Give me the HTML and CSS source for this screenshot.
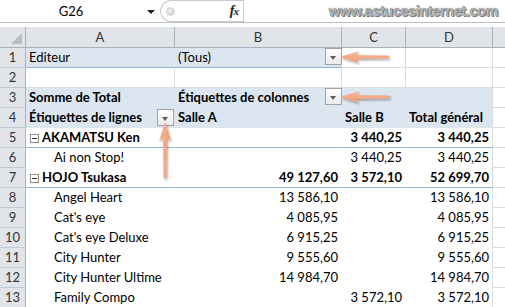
FILE: index.html
```html
<!DOCTYPE html>
<html lang="fr">
<head>
<meta charset="utf-8">
<title>Tableau croisé dynamique</title>
<link rel="stylesheet" href="styles.css">
</head>
<body>
<div class="app">
  <div class="fbar">
    <div class="namebox"><span class="ref">G26</span><span class="nb-arrow"></span></div>
    <div class="fxzone"><span class="grip"></span><span class="fx"><i>f</i><i class="x">x</i></span></div>
    <div class="finput"><span class="wm">www.astucesinternet.com</span></div>
  </div>

  <div class="sheet">
    <div class="corner"><svg width="12" height="12" viewBox="0 0 12 12"><polygon points="0,11 11,11 11,0" fill="#b7bdc5"/></svg></div>
    <div class="ch">A</div><div class="ch">B</div><div class="ch">C</div><div class="ch">D</div><div class="ch e"></div>

    <div class="rh">1</div>
    <div class="pv sep">Editeur</div>
    <div class="pv sep flex"><span>(Tous)</span><span class="dd edge"></span></div>
    <div></div><div></div><div class="e"></div>

    <div class="rh">2</div>
    <div></div><div></div><div></div><div></div><div class="e"></div>

    <div class="rh">3</div>
    <div class="pv b">Somme de Total</div>
    <div class="pv b flex"><span>Étiquettes de colonnes</span><span class="dd edge"></span></div>
    <div class="pv"></div><div class="pv d"></div><div class="e"></div>

    <div class="rh">4</div>
    <div class="pv b flex"><span>Étiquettes de lignes</span><span class="dd"></span></div>
    <div class="pv b">Salle A</div>
    <div class="pv b">Salle B</div>
    <div class="pv b d">Total général</div>
    <div class="e"></div>

    <div class="rh">5</div>
    <div class="pb b sep"><span class="tog"></span>AKAMATSU Ken</div>
    <div class="pb sep"></div>
    <div class="pb sep b r">3 440,25</div>
    <div class="pb sep b r d">3 440,25</div>
    <div class="e"></div>

    <div class="rh">6</div>
    <div class="pb ind">Ai non Stop!</div>
    <div class="pb"></div>
    <div class="pb r">3 440,25</div>
    <div class="pb r d">3 440,25</div>
    <div class="e"></div>

    <div class="rh">7</div>
    <div class="pb b sep"><span class="tog"></span>HOJO Tsukasa</div>
    <div class="pb sep b r">49 127,60</div>
    <div class="pb sep b r">3 572,10</div>
    <div class="pb sep b r d">52 699,70</div>
    <div class="e"></div>

    <div class="rh">8</div>
    <div class="pb ind">Angel Heart</div>
    <div class="pb r">13 586,10</div>
    <div class="pb"></div>
    <div class="pb r d">13 586,10</div>
    <div class="e"></div>

    <div class="rh">9</div>
    <div class="pb ind">Cat's eye</div>
    <div class="pb r">4 085,95</div>
    <div class="pb"></div>
    <div class="pb r d">4 085,95</div>
    <div class="e"></div>

    <div class="rh">10</div>
    <div class="pb ind">Cat's eye Deluxe</div>
    <div class="pb r">6 915,25</div>
    <div class="pb"></div>
    <div class="pb r d">6 915,25</div>
    <div class="e"></div>

    <div class="rh">11</div>
    <div class="pb ind">City Hunter</div>
    <div class="pb r">9 555,60</div>
    <div class="pb"></div>
    <div class="pb r d">9 555,60</div>
    <div class="e"></div>

    <div class="rh">12</div>
    <div class="pb ind">City Hunter Ultime</div>
    <div class="pb r">14 984,70</div>
    <div class="pb"></div>
    <div class="pb r d">14 984,70</div>
    <div class="e"></div>

    <div class="rh">13</div>
    <div class="pb ind">Family Compo</div>
    <div class="pb"></div>
    <div class="pb r">3 572,10</div>
    <div class="pb r d">3 572,10</div>
    <div class="e"></div>
  </div>

  <svg class="arrows" width="505" height="307" viewBox="0 0 505 307">
    <defs>
      <filter id="sh" x="-20%" y="-50%" width="140%" height="200%">
        <feDropShadow dx="1" dy="1.5" stdDeviation="1.2" flood-color="#000" flood-opacity="0.35"/>
      </filter>
      <linearGradient id="gh" x1="0" y1="0" x2="0" y2="1">
        <stop offset="0" stop-color="#f8b99b"/>
        <stop offset="1" stop-color="#f19a73"/>
      </linearGradient>
      <linearGradient id="gv" x1="0" y1="0" x2="1" y2="0">
        <stop offset="0" stop-color="#f8b99b"/>
        <stop offset="1" stop-color="#f19a73"/>
      </linearGradient>
    </defs>
    <polygon filter="url(#sh)" fill="url(#gh)" points="340,57 359,51 356,55 389,55.5 389,58.5 356,59 359,63"/>
    <polygon filter="url(#sh)" fill="url(#gh)" points="340,97 359,91 356,95 390,95.5 390,98.5 356,99 359,103"/>
    <polygon filter="url(#sh)" fill="url(#gv)" points="165,122 171,141 167,138 166.5,178 163.5,178 163,138 159,141"/>
  </svg>
</div>
</body>
</html>
```

FILE: styles.css
```css
html, body {
  margin: 0;
  padding: 0;
  background: #fff;
}

.app {
  position: relative;
  width: 505px;
  height: 307px;
  overflow: hidden;
  background: #fff;
  font-family: Lato, "Liberation Sans", sans-serif;
  color: #000;
}

/* ---------- formula bar ---------- */
.fbar {
  display: flex;
  height: 22px;
  border-bottom: 1px solid #b9bfc7;
  margin-bottom: 4px;
}

.namebox {
  width: 157px;
  display: flex;
  align-items: center;
  font-size: 13px;
  line-height: 22px;
}

.ref {
  width: 142px;
  text-align: center;
}

.nb-arrow {
  margin-left: 5px;
  width: 0;
  height: 0;
  border-left: 4px solid transparent;
  border-right: 4px solid transparent;
  border-top: 4px solid #222;
  margin-top: 1px;
}

.fxzone {
  margin-left: 3px;
  width: 83px;
  box-sizing: border-box;
  border: 1px solid #c6cbd1;
  border-right: none;
  border-radius: 11px 0 0 11px;
  display: flex;
  align-items: center;
}

.grip {
  width: 7px;
  height: 7px;
  margin-left: 5px;
  border-radius: 50%;
  background: radial-gradient(circle at 40% 35%, #f4f4f4, #c4c7cb);
  border: 1px solid #d3d6da;
}

.fx {
  margin-left: auto;
  margin-right: 5px;
  font-family: "Liberation Serif", serif;
  font-weight: bold;
  font-size: 14px;
  color: #222;
  letter-spacing: -1px;
}

.fx .x {
  font-size: 11px;
}

.finput {
  flex: 1;
  border-left: 1px solid #c6cbd1;
  text-align: right;
  padding-right: 7px;
}

.wm {
  font-family: "Liberation Sans", sans-serif;
  font-weight: bold;
  font-size: 14.5px;
  line-height: 21px;
  letter-spacing: -0.4px;
  color: #b4b4b4;
  text-shadow: 0 0 1px #666, 1px 1px 0 #7a7a7a;
}

/* ---------- sheet grid ---------- */
.sheet {
  display: grid;
  grid-template-columns: 26px 149px 167px 64px 87px 1fr;
  grid-template-rows: 21px repeat(13, 20px);
  font-size: 13px;
  line-height: 19px;
}

.sheet > div {
  box-sizing: border-box;
  border-right: 1px solid #dadcdd;
  border-bottom: 1px solid #dadcdd;
  padding: 0 3px;
  white-space: nowrap;
}

.corner,
.ch,
.rh {
  background: #e1e5ea;
  border-color: #aab1b9 !important;
  color: #333;
  text-align: center;
}

.ch {
  line-height: 20px;
}

.rh {
  border-bottom-color: #c3c9d0 !important;
  padding: 0 !important;
}

.corner {
  display: flex;
  align-items: flex-end;
  justify-content: flex-end;
  padding: 0 2px 2px 0 !important;
}

.sheet > .e {
  border-right: none;
}

/* pivot header area */
.sheet > .pv {
  background: #dce6f1;
  border-color: #dce6f1;
}

/* pivot body */
.sheet > .pb {
  border-color: #fff;
}

.sheet > .d {
  border-right-color: #dadcdd;
}

.sheet > .sep {
  border-bottom-color: #95b3d7;
}

.b {
  font-weight: bold;
}

.r {
  text-align: right;
}

.sheet > .ind {
  padding-left: 28px;
}

.sheet > .flex {
  display: flex;
  justify-content: space-between;
  align-items: flex-start;
  padding-right: 0;
}

/* filter dropdown button */
.dd {
  position: relative;
  flex: none;
  width: 17px;
  height: 17px;
  box-sizing: border-box;
  border: 1px solid #a3a3a3;
  background: linear-gradient(#ffffff, #eaeaea);
  margin-top: 1px;
}

.dd.edge {
  margin-right: -1px;
  margin-top: 0;
}

.dd::after {
  content: "";
  position: absolute;
  left: 4px;
  top: 7px;
  border-left: 3.5px solid transparent;
  border-right: 3.5px solid transparent;
  border-top: 4px solid #5a5a5a;
}

/* collapse toggle */
.tog {
  display: inline-block;
  position: relative;
  width: 9px;
  height: 9px;
  box-sizing: border-box;
  border: 1px solid #8c8c8c;
  background: #fff;
  margin: 0 3px 0 1px;
  vertical-align: -1px;
}

.tog::after {
  content: "";
  position: absolute;
  left: 1px;
  right: 1px;
  top: 3px;
  height: 1px;
  background: #333;
}

/* annotation arrows overlay */
.arrows {
  position: absolute;
  left: 0;
  top: 0;
  pointer-events: none;
}
```
